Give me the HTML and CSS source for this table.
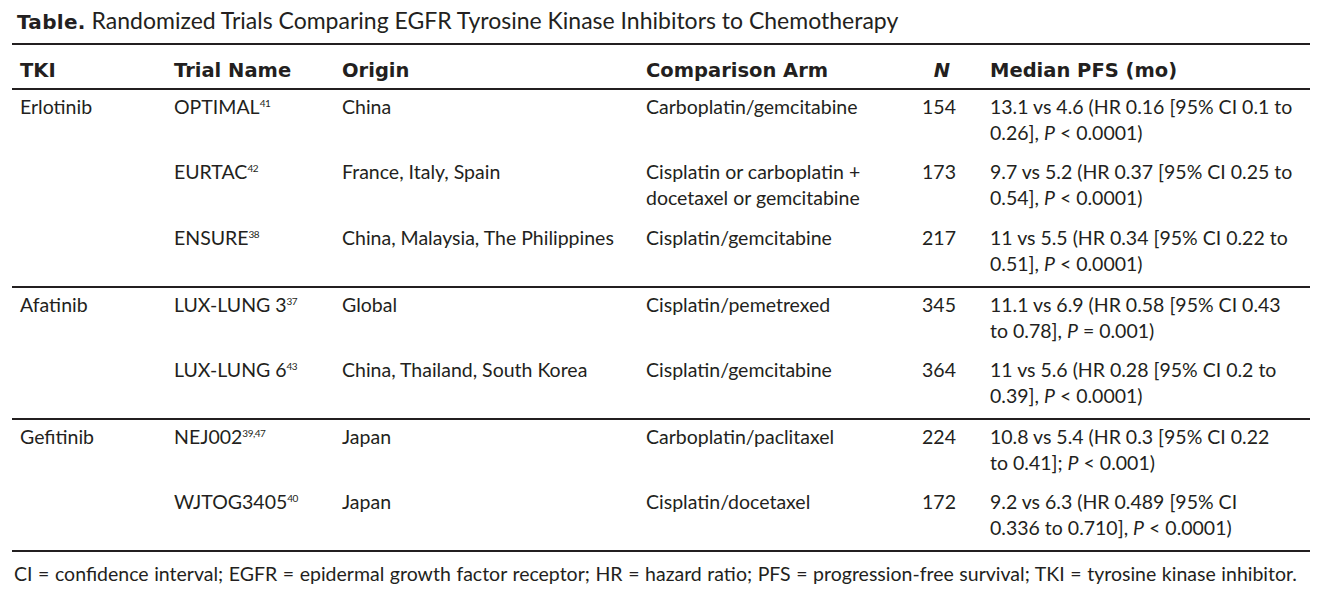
FILE: index.html
```html
<!DOCTYPE html>
<html>
<head>
<meta charset="utf-8">
<link rel="stylesheet" href="styles.css">
</head>
<body>
<div class="page">
  <div class="caption"><span class="label">Table.</span> Randomized Trials Comparing EGFR Tyrosine Kinase Inhibitors to Chemotherapy</div>
  <table class="trials">
    <colgroup>
      <col class="c-tki">
      <col class="c-trial">
      <col class="c-origin">
      <col class="c-arm">
      <col class="c-n">
      <col class="c-pfs">
    </colgroup>
    <thead>
      <tr>
        <th>TKI</th>
        <th>Trial Name</th>
        <th>Origin</th>
        <th>Comparison Arm</th>
        <th class="num"><i>N</i></th>
        <th class="pfs">Median PFS (mo)</th>
      </tr>
    </thead>
    <tbody class="group">
      <tr>
        <td>Erlotinib</td>
        <td>OPTIMAL<sup>41</sup></td>
        <td>China</td>
        <td>Carboplatin/gemcitabine</td>
        <td class="num">154</td>
        <td class="pfs">13.1 vs 4.6 (HR 0.16 [95% CI 0.1 to<br>0.26], <i>P</i> &lt; 0.0001)</td>
      </tr>
      <tr>
        <td></td>
        <td>EURTAC<sup>42</sup></td>
        <td>France, Italy, Spain</td>
        <td>Cisplatin or carboplatin +<br>docetaxel or gemcitabine</td>
        <td class="num">173</td>
        <td class="pfs">9.7 vs 5.2 (HR 0.37 [95% CI 0.25 to<br>0.54], <i>P</i> &lt; 0.0001)</td>
      </tr>
      <tr>
        <td></td>
        <td>ENSURE<sup>38</sup></td>
        <td>China, Malaysia, The Philippines</td>
        <td>Cisplatin/gemcitabine</td>
        <td class="num">217</td>
        <td class="pfs">11 vs 5.5 (HR 0.34 [95% CI 0.22 to<br>0.51], <i>P</i> &lt; 0.0001)</td>
      </tr>
    </tbody>
    <tbody class="group">
      <tr>
        <td>Afatinib</td>
        <td>LUX-LUNG 3<sup>37</sup></td>
        <td>Global</td>
        <td>Cisplatin/pemetrexed</td>
        <td class="num">345</td>
        <td class="pfs">11.1 vs 6.9 (HR 0.58 [95% CI 0.43<br>to 0.78], <i>P</i> = 0.001)</td>
      </tr>
      <tr>
        <td></td>
        <td>LUX-LUNG 6<sup>43</sup></td>
        <td>China, Thailand, South Korea</td>
        <td>Cisplatin/gemcitabine</td>
        <td class="num">364</td>
        <td class="pfs">11 vs 5.6 (HR 0.28 [95% CI 0.2 to<br>0.39], <i>P</i> &lt; 0.0001)</td>
      </tr>
    </tbody>
    <tbody class="group">
      <tr>
        <td>Gefitinib</td>
        <td>NEJ002<sup>39,47</sup></td>
        <td>Japan</td>
        <td>Carboplatin/paclitaxel</td>
        <td class="num">224</td>
        <td class="pfs">10.8 vs 5.4 (HR 0.3 [95% CI 0.22<br>to 0.41]; <i>P</i> &lt; 0.001)</td>
      </tr>
      <tr>
        <td></td>
        <td>WJTOG3405<sup>40</sup></td>
        <td>Japan</td>
        <td>Cisplatin/docetaxel</td>
        <td class="num">172</td>
        <td class="pfs">9.2 vs 6.3 (HR 0.489 [95% CI<br>0.336 to 0.710], <i>P</i> &lt; 0.0001)</td>
      </tr>
    </tbody>
  </table>
  <div class="footnote">CI = confidence interval; EGFR = epidermal growth factor receptor; HR = hazard ratio; PFS = progression-free survival; TKI = tyrosine kinase inhibitor.</div>
</div>
</body>
</html>
```

FILE: styles.css
```css
html, body {
  margin: 0;
  padding: 0;
  background: #ffffff;
}

body {
  font-family: "Lato", "Liberation Sans", sans-serif;
  color: #231f20;
  width: 1318px;
  height: 612px;
  overflow: hidden;
}

.page {
  padding: 0 8px 0 12px;
}

.caption {
  font-size: 23px;
  line-height: 26px;
  padding: 7px 0 0 5px;
  height: 43px;
  box-sizing: border-box;
  white-space: nowrap;
}

.caption .label {
  font-family: "DejaVu Sans", "Liberation Sans", sans-serif;
  font-weight: 700;
  font-size: 20px;
  letter-spacing: 0.3px;
}

.trials {
  width: 1298px;
  border-collapse: collapse;
  table-layout: fixed;
  font-size: 19.5px;
}

.c-tki { width: 154px; }
.c-trial { width: 168px; }
.c-origin { width: 304px; }
.c-arm { width: 262px; }
.c-n { width: 80px; }
.c-pfs { width: 330px; }

.trials thead tr {
  border-top: 2px solid #231f20;
  border-bottom: 2px solid #231f20;
}

.trials th {
  font-family: "DejaVu Sans", "Liberation Sans", sans-serif;
  font-weight: 700;
  font-size: 19.5px;
  text-align: left;
  height: 45px;
  box-sizing: border-box;
  padding: 8px 0 0 8px;
  vertical-align: middle;
}

.trials th.num {
  padding-right: 30px;
}

.trials td {
  vertical-align: top;
  box-sizing: border-box;
  padding: 4px 0 0 8px;
  line-height: 26px;
  height: 66px;
  white-space: nowrap;
}

.trials .num {
  text-align: right;
  padding-right: 24px;
  padding-left: 0;
}

.trials .pfs {
  padding-left: 10px;
}

.group {
  border-bottom: 2px solid #231f20;
}

sup {
  font-size: 10px;
  line-height: 0;
  vertical-align: 7px;
  letter-spacing: -0.5px;
}

.footnote {
  font-size: 19.5px;
  line-height: 26px;
  padding: 9px 0 0 2px;
  white-space: nowrap;
  word-spacing: 0.6px;
}
```
